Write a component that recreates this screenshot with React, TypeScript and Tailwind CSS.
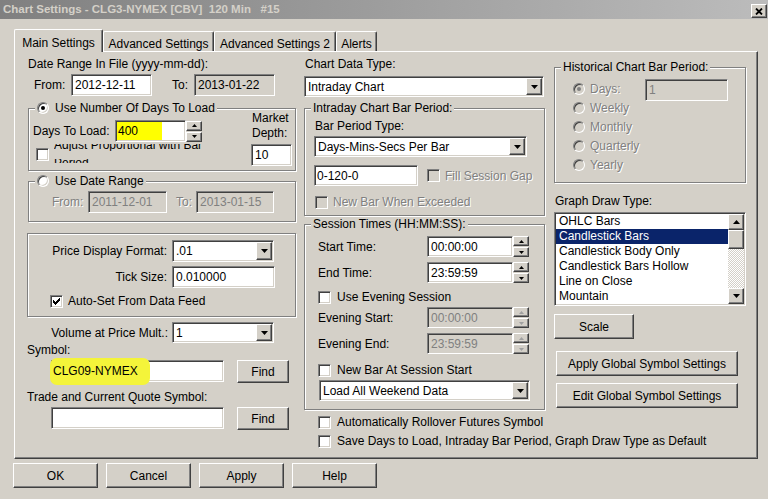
import React from 'react';

// classic win2k 3d edges
const sunken =
  'border border-t-[#808080] border-l-[#808080] border-b-white border-r-white shadow-[inset_1px_1px_0_#404040,inset_-1px_-1px_0_#d4d0c8]';
const raised =
  'border border-t-white border-l-white border-b-[#404040] border-r-[#404040] shadow-[inset_-1px_-1px_0_#808080]';
const etched = 'border border-[#808080] shadow-[inset_1px_1px_0_#fff,1px_1px_0_#fff]';
const dim = 'text-[#808080] [text-shadow:1px_1px_0_#fff]';

function Arrow({ dir = 'down', small = false, color = '#000' }: { dir?: 'up' | 'down'; small?: boolean; color?: string }) {
  const w = small ? 5 : 7;
  const h = small ? 3 : 4;
  const pts = dir === 'down' ? `0,0 ${w},0 ${w / 2},${h}` : `0,${h} ${w},${h} ${w / 2},0`;
  return (
    <svg width={w} height={h} viewBox={`0 0 ${w} ${h}`}>
      <polygon points={pts} fill={color} />
    </svg>
  );
}

function Field({ className = '', disabled = false, dimText = false, children }: { className?: string; disabled?: boolean; dimText?: boolean; children?: React.ReactNode }) {
  return (
    <div
      className={`${sunken} ${disabled ? 'bg-[#d4d0c8]' : 'bg-white'} ${dimText ? 'text-[#808080]' : ''} flex items-center pl-[3px] whitespace-nowrap shrink-0 ${className}`}
    >
      {children}
    </div>
  );
}

function Select({ className = '', value }: { className?: string; value: string }) {
  return (
    <div className={`${sunken} bg-white flex items-center p-[1px] shrink-0 ${className}`}>
      <span className="flex-1 pl-[2px] whitespace-nowrap overflow-hidden">{value}</span>
      <div className={`${raised} bg-[#d4d0c8] w-[16px] h-full flex items-center justify-center`}>
        <Arrow />
      </div>
    </div>
  );
}

function Spinner({ disabled = false }: { disabled?: boolean }) {
  const c = disabled ? '#a0a0a0' : '#000';
  return (
    <div className="flex flex-col justify-between w-[16px] h-[21px] shrink-0">
      <div className={`${raised} bg-[#d4d0c8] h-[10px] flex items-center justify-center`}>
        <Arrow dir="up" small color={c} />
      </div>
      <div className={`${raised} bg-[#d4d0c8] h-[10px] flex items-center justify-center`}>
        <Arrow small color={c} />
      </div>
    </div>
  );
}

function Check({ checked = false, disabled = false, className = '' }: { checked?: boolean; disabled?: boolean; className?: string }) {
  return (
    <div className={`${sunken} ${disabled ? 'bg-[#d4d0c8]' : 'bg-white'} w-[13px] h-[13px] shrink-0 flex items-center justify-center ${className}`}>
      {checked && (
        <svg width="7" height="7" viewBox="0 0 7 7" shapeRendering="crispEdges">
          <path d="M0 2h1v3H0z M1 3h1v3H1z M2 4h1v3H2z M3 3h1v3H3z M4 2h1v3H4z M5 1h1v3H5z M6 0h1v3H6z" fill="#000" />
        </svg>
      )}
    </div>
  );
}

function Radio({ on = false, disabled = false, className = '' }: { on?: boolean; disabled?: boolean; className?: string }) {
  return (
    <div
      className={`w-[12px] h-[12px] rounded-full shrink-0 border border-t-[#808080] border-l-[#808080] border-b-white border-r-white shadow-[inset_1px_1px_0_#404040,inset_-1px_-1px_0_#d4d0c8] ${disabled ? 'bg-[#d4d0c8]' : 'bg-white'} flex items-center justify-center ${className}`}
    >
      {on && <div className={`w-[4px] h-[4px] rounded-full ${disabled ? 'bg-[#808080]' : 'bg-black'}`} />}
    </div>
  );
}

function Btn({ className = '', children }: { className?: string; children: React.ReactNode }) {
  return (
    <button type="button" className={`${raised} bg-[#d4d0c8] flex items-center justify-center shrink-0 ${className}`}>
      {children}
    </button>
  );
}

function Caption({ children }: { children: React.ReactNode }) {
  return (
    <div className="-mt-[8px] ml-[6px] px-[2px] w-fit h-[14px] leading-[14px] bg-[#d4d0c8] flex items-center whitespace-nowrap">
      {children}
    </div>
  );
}

const graphTypes = ['OHLC Bars', 'Candlestick Bars', 'Candlestick Body Only', 'Candlestick Bars Hollow', 'Line on Close', 'Mountain'];

export default function App() {
  return (
    <div className="w-[768px] h-[499px] bg-[#d4d0c8] overflow-hidden font-['Liberation_Sans',Arial,sans-serif] text-[12px] leading-[14px] text-black">
      {/* Title bar */}
      <div className="h-[19px] flex items-start bg-gradient-to-r from-[#808080] to-[#bcbcbc]">
        <span className="pl-[3px] leading-[19px] font-bold text-[11.5px] text-[#d4d0c8] whitespace-pre">
          {'Chart Settings - CLG3-NYMEX [CBV]  120 Min   #15'}
        </span>
        <div className={`${raised} bg-[#d4d0c8] ml-auto mr-[1px] mt-[4px] w-[16px] h-[14px] flex items-center justify-center`}>
          <svg width="8" height="7" viewBox="0 0 8 7">
            <path d="M1 0.5 L7 6.5 M7 0.5 L1 6.5" stroke="#000" strokeWidth="1.8" />
          </svg>
        </div>
      </div>

      {/* Tabs */}
      <div className="relative z-10 h-[33px] flex items-end pl-[14px]">
        <div className={`w-[89px] h-[23px] border-t border-l border-r border-t-white border-l-white border-r-[#404040] shadow-[inset_-1px_0_0_#808080] rounded-t-[2px] bg-[#d4d0c8] flex justify-center pt-[6px]`}>
          Main Settings
        </div>
        <div className="w-[111px] h-[20px] mb-[1px] border-t border-l border-r border-t-white border-l-white border-r-[#404040] shadow-[inset_-1px_0_0_#808080] rounded-t-[2px] flex justify-center pt-[5px]">
          Advanced Settings
        </div>
        <div className="w-[122px] h-[20px] mb-[1px] border-t border-l border-r border-t-white border-l-white border-r-[#404040] shadow-[inset_-1px_0_0_#808080] rounded-t-[2px] flex justify-center pt-[5px]">
          Advanced Settings 2
        </div>
        <div className="w-[41px] h-[20px] mb-[1px] border-t border-l border-r border-t-white border-l-white border-r-[#404040] shadow-[inset_-1px_0_0_#808080] rounded-t-[2px] flex justify-center pt-[5px]">
          Alerts
        </div>
      </div>

      {/* Tab panel */}
      <div className={`-mt-[1px] ml-[14px] w-[744px] h-[408px] ${raised} flex pl-[12px]`}>
        {/* Left column */}
        <div className="w-[277px] flex flex-col shrink-0">
          <div className="mt-[5px] ml-[1px] h-[14px]">Date Range In File (yyyy-mm-dd):</div>
          <div className="mt-[3px] h-[22px] flex items-center">
            <span className="ml-[7px] w-[37px]">From:</span>
            <Field className="w-[81px] h-[22px]">2012-12-11</Field>
            <span className="ml-[20px] w-[22px]">To:</span>
            <Field disabled className="w-[81px] h-[22px]">2013-01-22</Field>
          </div>

          <div className={`${etched} mt-[12px] ml-[1px] w-[268px] h-[63px]`}>
            <Caption>
              <Radio on />
              <span className="ml-[6px]">Use Number Of Days To Load</span>
            </Caption>
            <div className="flex">
              <div className="flex flex-col">
                <div className="mt-[5px] h-[22px] flex items-center">
                  <span className="ml-[4px] w-[82px]">Days To Load:</span>
                  <Field className="w-[71px] h-[22px] !pl-0">
                    <span className="ml-[1px] w-[45px] h-[18px] leading-[18px] pl-[1px] bg-[#ffff00]">400</span>
                  </Field>
                  <Spinner />
                </div>
                <div className="mt-[2px] flex">
                  <Check className="ml-[7px] mt-[4px]" />
                  <div className="ml-[5px] flex flex-col">
                    <div className="h-[7px] overflow-hidden">
                      <div className="-mt-[6px] leading-[14px] whitespace-nowrap">Adjust Proportional with Bar</div>
                    </div>
                    <div className="mt-[8px] h-[4px] overflow-hidden">
                      <div className="-mt-[3px] leading-[14px] whitespace-nowrap">Period</div>
                    </div>
                  </div>
                </div>
              </div>
              <div className="ml-auto mr-[3px] w-[41px] -mt-[4px] flex flex-col">
                <div className="pl-[1px] leading-[15px]">Market</div>
                <div className="pl-[1px] leading-[15px]">Depth:</div>
                <Field className="mt-[3px] w-[41px] h-[22px]">10</Field>
              </div>
            </div>
          </div>

          <div className={`${etched} mt-[10px] ml-[1px] w-[268px] h-[41px]`}>
            <Caption>
              <Radio />
              <span className="ml-[6px]">Use Date Range</span>
            </Caption>
            <div className="mt-[3px] h-[22px] flex items-center">
              <span className={`ml-[23px] w-[36px] ${dim}`}>From:</span>
              <Field disabled dimText className="w-[79px] h-[22px]">2011-12-01</Field>
              <span className={`ml-[9px] w-[20px] ${dim}`}>To:</span>
              <Field disabled dimText className="w-[78px] h-[22px]">2013-01-15</Field>
            </div>
          </div>

          <div className={`${etched} mt-[11px] w-[269px] h-[84px] flex flex-col`}>
            <div className="mt-[6px] h-[22px] flex items-center">
              <span className="w-[141px] pr-[2px] text-right">Price Display Format:</span>
              <Select className="ml-[3px] w-[102px] h-[22px]" value=".01" />
            </div>
            <div className="mt-[4px] h-[22px] flex items-center">
              <span className="w-[141px] pr-[2px] text-right">Tick Size:</span>
              <Field className="ml-[3px] w-[103px] h-[22px]">0.010000</Field>
            </div>
            <div className="mt-[6px] h-[14px] flex items-center">
              <Check checked className="ml-[22px]" />
              <span className="ml-[5px]">Auto-Set From Data Feed</span>
            </div>
          </div>

          <div className="mt-[5px] h-[21px] flex items-center">
            <span className="w-[142px] pr-[1px] text-right">Volume at Price Mult.:</span>
            <Select className="ml-[3px] w-[102px] h-[21px]" value="1" />
          </div>
          <div className="h-[14px]">Symbol:</div>
          <div className="mt-[3px] flex items-start">
            <Field className="ml-[24px] w-[173px] h-[22px] !pl-0">
              <span className="-ml-[2px] w-[100px] h-[27px] leading-[27px] pl-[3px] rounded-[7px] bg-[#f4f43a]">CLG09-NYMEX</span>
            </Field>
            <Btn className="ml-[13px] w-[52px] h-[23px]">Find</Btn>
          </div>
          <div className="mt-[7px] h-[14px]">Trade and Current Quote Symbol:</div>
          <div className="mt-[3px] flex items-start">
            <Field className="ml-[24px] w-[173px] h-[22px]" />
            <Btn className="ml-[13px] w-[52px] h-[23px]">Find</Btn>
          </div>
        </div>

        {/* Middle column */}
        <div className="w-[241px] flex flex-col shrink-0">
          <div className="mt-[5px] pl-[1px] h-[14px]">Chart Data Type:</div>
          <Select className="mt-[5px] w-[240px] h-[21px]" value="Intraday Chart" />

          <div className={`${etched} mt-[11px] w-[241px] h-[108px] flex flex-col`}>
            <Caption>Intraday Chart Bar Period:</Caption>
            <div className="mt-[4px] ml-[10px] h-[14px]">Bar Period Type:</div>
            <Select className="mt-[3px] ml-[9px] w-[213px] h-[21px]" value="Days-Mins-Secs Per Bar" />
            <div className="mt-[8px] h-[21px] flex items-center">
              <Field className="ml-[9px] w-[104px] h-[21px] !pl-[2px]">0-120-0</Field>
              <Check disabled className="ml-[9px]" />
              <span className={`ml-[5px] ${dim}`}>Fill Session Gap</span>
            </div>
            <div className="mt-[9px] h-[14px] flex items-center">
              <Check disabled className="ml-[10px]" />
              <span className={`ml-[5px] ${dim}`}>New Bar When Exceeded</span>
            </div>
          </div>

          <div className={`${etched} mt-[8px] w-[241px] h-[186px] flex flex-col`}>
            <Caption>Session Times (HH:MM:SS):</Caption>
            <div className="mt-[5px] h-[21px] flex items-center">
              <span className="ml-[13px] w-[109px]">Start Time:</span>
              <Field className="w-[86px] h-[21px]">00:00:00</Field>
              <Spinner />
            </div>
            <div className="mt-[5px] h-[21px] flex items-center">
              <span className="ml-[13px] w-[109px]">End Time:</span>
              <Field className="w-[86px] h-[21px]">23:59:59</Field>
              <Spinner />
            </div>
            <div className="mt-[7px] h-[14px] flex items-center">
              <Check className="ml-[13px]" />
              <span className="ml-[6px]">Use Evening Session</span>
            </div>
            <div className="mt-[3px] h-[21px] flex items-center">
              <span className="ml-[13px] w-[109px]">Evening Start:</span>
              <Field disabled dimText className="w-[86px] h-[21px]">00:00:00</Field>
              <Spinner disabled />
            </div>
            <div className="mt-[5px] h-[21px] flex items-center">
              <span className="ml-[13px] w-[109px]">Evening End:</span>
              <Field disabled dimText className="w-[86px] h-[21px]">23:59:59</Field>
              <Spinner disabled />
            </div>
            <div className="mt-[9px] h-[14px] flex items-center">
              <Check className="ml-[13px]" />
              <span className="ml-[6px]">New Bar At Session Start</span>
            </div>
            <Select className="mt-[3px] ml-[14px] w-[211px] h-[21px]" value="Load All Weekend Data" />
          </div>

          <div className="mt-[5px] h-[14px] flex items-center whitespace-nowrap">
            <Check className="ml-[14px]" />
            <span className="ml-[6px]">Automatically Rollover Futures Symbol</span>
          </div>
          <div className="mt-[5px] h-[14px] flex items-center whitespace-nowrap">
            <Check className="ml-[14px]" />
            <span className="ml-[6px]">Save Days to Load, Intraday Bar Period, Graph Draw Type as Default</span>
          </div>
        </div>

        {/* Right column */}
        <div className="ml-[9px] w-[192px] flex flex-col shrink-0">
          <div className={`${etched} mt-[15px] w-[192px] h-[116px] flex flex-col`}>
            <Caption>Historical Chart Bar Period:</Caption>
            <div className="mt-[5px] h-[19px] flex items-center">
              <Radio on disabled className="ml-[18px]" />
              <span className={`ml-[5px] w-[55px] ${dim}`}>Days:</span>
              <Field disabled dimText className="self-start w-[83px] h-[22px]">1</Field>
            </div>
            {['Weekly', 'Monthly', 'Quarterly', 'Yearly'].map(p => (
              <div key={p} className="h-[19px] flex items-center">
                <Radio disabled className="ml-[18px]" />
                <span className={`ml-[5px] ${dim}`}>{p}</span>
              </div>
            ))}
          </div>

          <div className="mt-[11px] pl-[1px] h-[14px]">Graph Draw Type:</div>
          <div className={`${sunken} mt-[4px] w-[192px] h-[94px] bg-white p-[1px] flex`}>
            <div className="flex-1 flex flex-col">
              {graphTypes.map((t, i) => (
                <div
                  key={t}
                  className={`h-[15px] leading-[15px] pl-[3px] whitespace-nowrap ${i === 1 ? 'bg-[#0a246a] text-white' : ''}`}
                >
                  {t}
                </div>
              ))}
            </div>
            <div className="w-[16px] flex flex-col">
              <div className={`${raised} bg-[#d4d0c8] h-[16px] flex items-center justify-center`}>
                <Arrow dir="up" />
              </div>
              <div className={`${raised} bg-[#d4d0c8] h-[19px]`} />
              <div className="flex-1 bg-[image:repeating-conic-gradient(#ffffff_0_25%,#d4d0c8_0_50%)] bg-[length:2px_2px]" />
              <div className={`${raised} bg-[#d4d0c8] h-[16px] flex items-center justify-center`}>
                <Arrow />
              </div>
            </div>
          </div>

          <Btn className="mt-[8px] w-[80px] h-[25px]">Scale</Btn>
          <Btn className="mt-[12px] ml-[2px] w-[182px] h-[25px]">Apply Global Symbol Settings</Btn>
          <Btn className="mt-[7px] ml-[2px] w-[182px] h-[25px]">Edit Global Symbol Settings</Btn>
        </div>
      </div>

      {/* Dialog buttons */}
      <div className="mt-[4px] ml-[13px] flex gap-[8px]">
        <Btn className="w-[85px] h-[25px]">OK</Btn>
        <Btn className="w-[85px] h-[25px]">Cancel</Btn>
        <Btn className="w-[85px] h-[25px]">Apply</Btn>
        <Btn className="w-[85px] h-[25px]">Help</Btn>
      </div>
    </div>
  );
}
